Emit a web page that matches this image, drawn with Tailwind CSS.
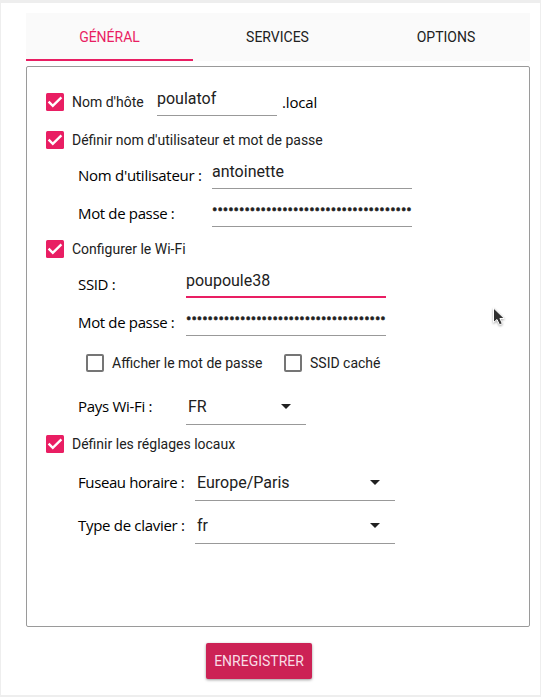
<!DOCTYPE html>
<html lang="fr">
<head>
<meta charset="utf-8">
<title>Réglages</title>
<script src="https://cdn.jsdelivr.net/npm/@tailwindcss/browser@4"></script>
</head>
<body class="h-[697px] w-[541px] overflow-hidden bg-[#eeeeee] pt-[3px] pr-px pb-[2px] pl-px font-['Roboto',sans-serif] text-[#212121]">
<svg class="hidden">
  <symbol id="check" viewBox="0 0 18 18"><rect width="18" height="18" rx="1.5" fill="#e91e63"/><path d="M2.6 8.7 6.8 12.8 15.4 4.4" fill="none" stroke="#fff" stroke-width="2.4"/></symbol>
  <symbol id="box" viewBox="0 0 18 18"><rect x="1" y="1" width="16" height="16" rx="1" fill="none" stroke="#757575" stroke-width="2"/></symbol>
  <symbol id="arrow" viewBox="0 0 10 5"><path d="M0 0h10L5 5z" fill="#212121"/></symbol>
</svg>
<main class="flex h-[692px] flex-col bg-white pt-[10px] pr-[10px] pl-[25px]">
  <nav class="grid h-12 shrink-0 grid-cols-[167px_169px_168px] bg-[#fafafa] text-center text-sm leading-[48px]">
    <div class="h-12 border-b-2 border-[#e91e63] text-[#e91e63]">GÉNÉRAL</div>
    <div>SERVICES</div>
    <div>OPTIONS</div>
  </nav>
  <section class="mt-[5px] h-[561px] shrink-0 rounded-[2px] border border-[#9a9a9a] pt-4 pl-[19px]">
    <div class="flex h-[38px] items-center">
      <svg class="size-[18px]"><use href="#check"/></svg>
      <span class="ml-2 w-[85px] text-sm">Nom d'hôte</span>
      <div class="mb-[5px] h-[28px] w-[120px] self-end border-b border-[#999] text-base leading-[22px]">poulatof</div>
      <span class="ml-[5px] font-['Open_Sans',sans-serif] text-[15px] tracking-[-0.15px] text-black">.local</span>
    </div>
    <div class="flex h-[38px] items-center">
      <svg class="size-[18px]"><use href="#check"/></svg>
      <span class="ml-2 text-sm">Définir nom d'utilisateur et mot de passe</span>
    </div>
    <div class="flex h-[30px] items-end pl-8">
      <span class="w-[134px] pb-[2px] whitespace-nowrap font-['Open_Sans',sans-serif] text-[15px] leading-6 tracking-[-0.28px] text-black">Nom d'utilisateur :</span>
      <div class="h-[28px] w-[200px] border-b border-[#999] text-base leading-[22px]">antoinette</div>
    </div>
    <div class="flex h-[38px] items-end pl-8">
      <span class="w-[134px] pb-[2px] whitespace-nowrap font-['Open_Sans',sans-serif] text-[15px] leading-6 tracking-[-0.35px] text-black">Mot de passe :</span>
      <div class="h-[28px] w-[200px] overflow-hidden border-b border-[#999] text-base leading-[22px] [-webkit-text-stroke:0.5px_#212121]">•••••••••••••••••••••••••••••••••••••</div>
    </div>
    <div class="mt-[3px] flex h-[38px] items-center">
      <svg class="size-[18px]"><use href="#check"/></svg>
      <span class="ml-2 text-sm">Configurer le Wi-Fi</span>
    </div>
    <div class="flex h-[30px] items-end pl-8">
      <span class="w-[108px] pb-[2px] whitespace-nowrap font-['Open_Sans',sans-serif] text-[15px] leading-6 tracking-[-0.35px] text-black">SSID :</span>
      <div class="h-[29px] w-[200px] border-b-2 border-[#e91e63] text-base leading-[24px]">poupoule38</div>
    </div>
    <div class="flex h-[38px] items-end pl-8">
      <span class="w-[108px] pb-[2px] whitespace-nowrap font-['Open_Sans',sans-serif] text-[15px] leading-6 tracking-[-0.35px] text-black">Mot de passe :</span>
      <div class="h-[28px] w-[200px] overflow-hidden border-b border-[#999] text-base leading-[22px] [-webkit-text-stroke:0.5px_#212121]">•••••••••••••••••••••••••••••••••••••</div>
    </div>
    <div class="mt-2 flex h-[38px] items-center pl-10 text-sm">
      <svg class="size-[18px]"><use href="#box"/></svg>
      <span class="ml-2 w-[172px]">Afficher le mot de passe</span>
      <svg class="size-[18px]"><use href="#box"/></svg>
      <span class="ml-2">SSID caché</span>
    </div>
    <div class="flex h-[43px] items-end pl-8">
      <span class="w-[108px] pb-[7px] whitespace-nowrap font-['Open_Sans',sans-serif] text-[15px] leading-6 tracking-[-0.3px] text-black">Pays Wi-Fi :</span>
      <div class="flex h-[30px] w-[120px] justify-between border-b border-[#999] pr-[15px] pl-[2px] text-base leading-[24px]">FR<svg class="mt-[9px] h-[5px] w-[10px]"><use href="#arrow"/></svg></div>
    </div>
    <div class="flex h-[38px] items-center">
      <svg class="size-[18px]"><use href="#check"/></svg>
      <span class="ml-2 text-sm">Définir les réglages locaux</span>
    </div>
    <div class="flex h-[38px] items-end pl-8">
      <span class="w-[117px] pb-[7px] whitespace-nowrap font-['Open_Sans',sans-serif] text-[15px] leading-6 tracking-[-0.4px] text-black">Fuseau horaire :</span>
      <div class="flex h-[30px] w-[200px] justify-between border-b border-[#999] pr-[15px] pl-[2px] text-base leading-[24px]">Europe/Paris<svg class="mt-[9px] h-[5px] w-[10px]"><use href="#arrow"/></svg></div>
    </div>
    <div class="flex h-[43px] items-end pl-8">
      <span class="w-[117px] pb-[7px] whitespace-nowrap font-['Open_Sans',sans-serif] text-[15px] leading-6 tracking-[-0.3px] text-black">Type de clavier :</span>
      <div class="flex h-[30px] w-[200px] justify-between border-b border-[#999] pr-[15px] pl-[2px] text-base leading-[24px]">fr<svg class="mt-[9px] h-[5px] w-[10px]"><use href="#arrow"/></svg></div>
    </div>
  </section>
  <button class="mt-4 ml-[180px] h-9 w-[106px] shrink-0 rounded-[2px] bg-[#cc2255] text-center text-sm leading-9 text-[#f8dde6] shadow-[0_1px_3px_rgba(0,0,0,0.4)]">ENREGISTRER</button>
</main>
<svg class="absolute top-[306px] left-[491px] h-[22px] w-[16px] drop-shadow-[0_1px_1px_rgba(0,0,0,0.35)]" viewBox="0 0 16 22"><path d="M2.5 2v14.5l3.5-3 2.5 5.3 2.8-1.2-2.4-5.1h4.4z" fill="#303030" stroke="#fff" stroke-width="1"/></svg>
</body>
</html>
